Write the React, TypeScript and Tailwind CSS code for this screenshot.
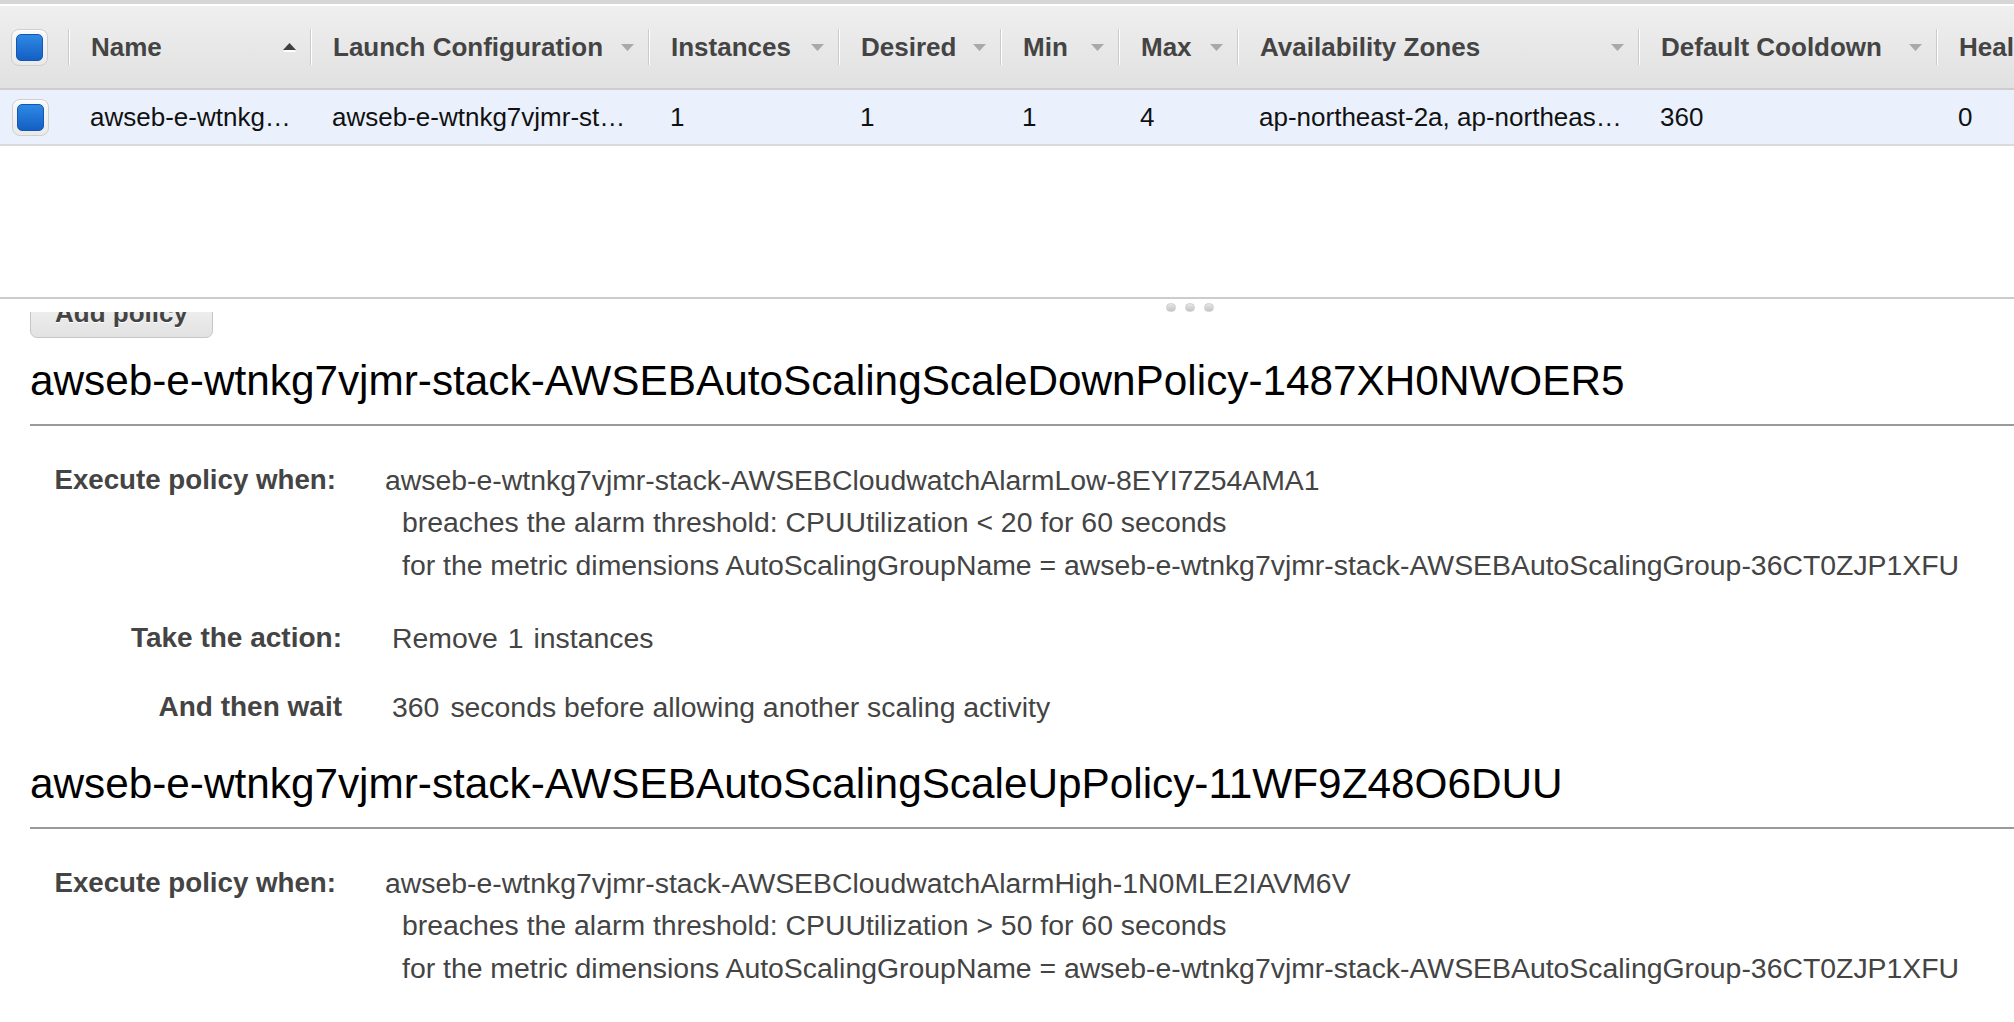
import React from "react";

const cols = [
  { label: "Name", w: 242, sort: "up", val: "awseb-e-wtnkg…" },
  { label: "Launch Configuration", w: 338, sort: "down", val: "awseb-e-wtnkg7vjmr-st…" },
  { label: "Instances", w: 190, sort: "down", val: "1" },
  { label: "Desired", w: 162, sort: "down", val: "1" },
  { label: "Min", w: 118, sort: "down", val: "1" },
  { label: "Max", w: 119, sort: "down", val: "4" },
  { label: "Availability Zones", w: 401, sort: "down", val: "ap-northeast-2a, ap-northeas…" },
  { label: "Default Cooldown", w: 298, sort: "down", val: "360" },
  { label: "Health Check Grace Period", w: 400, sort: "down", val: "0" },
];

function Arrow({ up }: { up: boolean }) {
  return up ? (
    <svg width="15" height="9" viewBox="0 0 15 9" className="shrink-0">
      <polygon points="7.5,1 14,8 1,8" fill="#ffffff" transform="translate(0,1)" />
      <polygon points="7.5,0 14,7 1,7" fill="#3f3f3f" />
    </svg>
  ) : (
    <svg width="15" height="9" viewBox="0 0 15 9" className="shrink-0">
      <polygon points="1,1 14,1 7.5,8" fill="#a9a9a9" />
    </svg>
  );
}

function Checkbox() {
  return (
    <div className="w-[37px] h-[37px] rounded-[8px] border border-[#cfcfcf] bg-gradient-to-b from-[#fafafa] to-[#e9e9e9] flex items-center justify-center shadow-[inset_0_1px_0_#fff]">
      <div className="w-[27px] h-[27px] rounded-[5px] bg-gradient-to-b from-[#2f89e3] to-[#135fc4] border border-[#1257b3]" />
    </div>
  );
}

function Sep() {
  return <div className="w-[2px] h-[36px] bg-[#cbcbcb] border-r border-r-white shrink-0" />;
}

export default function App() {
  return (
    <div
      className="w-[2014px] h-[1022px] overflow-hidden bg-white flex flex-col"
      style={{ fontFamily: '"Liberation Sans", Arial, Helvetica, sans-serif' }}
    >
      {/* Top panel */}
      <div className="h-[297px] shrink-0 flex flex-col overflow-hidden">
        <div className="h-[4px] bg-[#d6d6d6]" />
        <div className="h-[2px] bg-white" />
        {/* header */}
        <div className="h-[82px] flex items-center bg-gradient-to-b from-[#efefef] to-[#e1e1e1] border-b-2 border-b-[#cdcdcd] box-content">
          <div className="w-[68px] shrink-0 pl-[11px] flex items-center">
            <Checkbox />
          </div>
          {cols.map((c, i) => (
            <div key={i} className="flex items-center shrink-0" style={{ width: c.w }}>
              <Sep />
              <div className="flex-1 flex items-center pl-[21px] pr-[13px] overflow-hidden">
                <span className="flex-1 whitespace-nowrap text-[26px] font-bold text-[#444]">
                  {c.label}
                </span>
                {i < 8 && <Arrow up={c.sort === "up"} />}
              </div>
            </div>
          ))}
        </div>
        {/* row */}
        <div className="h-[54px] flex items-center bg-[#eaf1fd] border-b-2 border-b-[#dadada] box-content">
          <div className="w-[68px] shrink-0 pl-[12px] flex items-center">
            <Checkbox />
          </div>
          {cols.map((c, i) => (
            <div
              key={i}
              className="shrink-0 pl-[22px] whitespace-nowrap overflow-hidden text-[26px] text-[#111]"
              style={{ width: c.w }}
            >
              {c.val}
            </div>
          ))}
        </div>
      </div>

      {/* splitter */}
      <div className="h-[15px] shrink-0 border-t-2 border-t-[#cccccc] flex items-start pt-[4px] pl-[1166px] gap-[9px]">
        {[0, 1, 2].map((d) => (
          <div
            key={d}
            className="w-[10px] h-[9px] rounded-full bg-gradient-to-b from-[#e6e6e6] to-[#c4c4c4] border border-[#cfcfcf]"
          />
        ))}
      </div>

      {/* bottom panel (scrolled) */}
      <div className="flex-1 overflow-hidden">
        <div className="-mt-[24px] pl-[30px]">
          <button className="h-[50px] w-[183px] rounded-[7px] border border-[#c6c6c6] bg-gradient-to-b from-[#f7f7f7] to-[#e2e2e2] text-[26px] font-bold text-[#444] [text-shadow:0_1px_0_#fff] flex items-center justify-center">
            Add policy
          </button>

          <Policy
            name="awseb-e-wtnkg7vjmr-stack-AWSEBAutoScalingScaleDownPolicy-1487XH0NWOER5"
            alarm="awseb-e-wtnkg7vjmr-stack-AWSEBCloudwatchAlarmLow-8EYI7Z54AMA1"
            cond="CPUUtilization < 20 for 60 seconds"
            action="Remove"
            first
          />
          <Policy
            name="awseb-e-wtnkg7vjmr-stack-AWSEBAutoScalingScaleUpPolicy-11WF9Z48O6DUU"
            alarm="awseb-e-wtnkg7vjmr-stack-AWSEBCloudwatchAlarmHigh-1N0MLE2IAVM6V"
            cond="CPUUtilization > 50 for 60 seconds"
            action="Add"
          />
        </div>
      </div>
    </div>
  );
}

function Policy({
  name,
  alarm,
  cond,
  action,
  first,
}: {
  name: string;
  alarm: string;
  cond: string;
  action: string;
  first?: boolean;
}) {
  return (
    <div className={first ? "mt-[19px]" : "mt-[32px]"}>
      <div className="text-[42.3px] leading-[48px] text-[#000] pb-[19px] border-b-2 border-b-[#9a9a9a] whitespace-nowrap">
        {name}
      </div>
      <div className="mt-[33px] flex leading-[42.4px]">
        <div className="w-[306px] shrink-0 text-right text-[27.7px] font-bold text-[#444]">
          Execute policy when:
        </div>
        <div className="pl-[49px] text-[28.4px] text-[#444] whitespace-nowrap">
          <div>{alarm}</div>
          <div className="pl-[17px]">breaches the alarm threshold: {cond}</div>
          <div className="pl-[17px]">
            for the metric dimensions AutoScalingGroupName = awseb-e-wtnkg7vjmr-stack-AWSEBAutoScalingGroup-36CT0ZJP1XFU
          </div>
        </div>
      </div>
      <div className="mt-[31px] flex leading-[42.4px]">
        <div className="w-[312px] shrink-0 text-right text-[28px] font-bold text-[#444]">
          Take the action:
        </div>
        <div className="pl-[50px] text-[28.4px] text-[#444] whitespace-nowrap">
          <span>{action}</span>
          <span className="ml-[10px]">1</span>
          <span className="ml-[10px]">instances</span>
        </div>
      </div>
      <div className="mt-[26px] flex leading-[42.4px]">
        <div className="w-[312px] shrink-0 text-right text-[28px] font-bold text-[#444]">
          And then wait
        </div>
        <div className="pl-[50px] text-[28.4px] text-[#444] whitespace-nowrap">
          <span>360</span>
          <span className="ml-[11px]">seconds before allowing another scaling activity</span>
        </div>
      </div>
    </div>
  );
}
